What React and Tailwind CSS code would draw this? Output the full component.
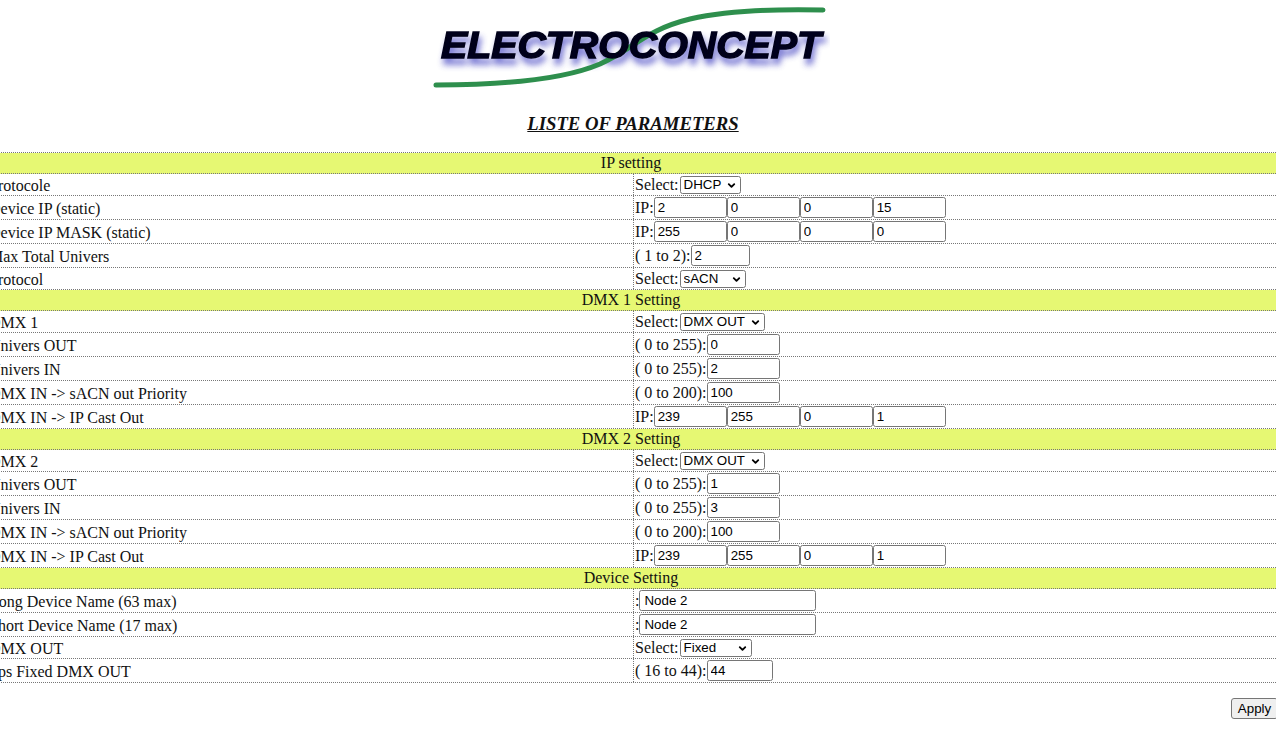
import { ChevronDown } from "lucide-react";

const SERIF = "font-['Liberation_Serif',serif]";

const Logo = () => (
  <svg width="400" height="96" viewBox="0 0 400 96" className="block">
    <defs>
      <filter id="glow" x="-10%" y="-50%" width="120%" height="200%">
        <feGaussianBlur stdDeviation="3" />
      </filter>
      <filter id="soft" x="-5%" y="-20%" width="110%" height="140%">
        <feGaussianBlur stdDeviation="0.35" />
      </filter>
    </defs>
    <text x="13" y="64" textLength="380" lengthAdjust="spacingAndGlyphs" fontFamily="Liberation Sans" fontWeight="bold" fontStyle="italic" fontSize="36" fill="#3c3cc0" stroke="#3c3cc0" strokeWidth="1.5" filter="url(#glow)" opacity="0.7">
      ELECTROCONCEPT
    </text>
    <path d="M6 85 C 60 85 130 81 170 64 C 205 48 215 30 260 19 C 300 10 350 9 393 10" fill="none" stroke="#2f8f4e" strokeWidth="5" strokeLinecap="round" filter="url(#soft)" />
    <text x="11" y="58" textLength="380" lengthAdjust="spacingAndGlyphs" fontFamily="Liberation Sans" fontWeight="bold" fontStyle="italic" fontSize="36" fill="#05051a" stroke="#05051a" strokeWidth="1.4" filter="url(#soft)">
      ELECTROCONCEPT
    </text>
  </svg>
);

const Input = ({ value, className }) => (
  <input
    readOnly
    value={value}
    className={`h-[21px] rounded-[2.5px] border border-[#767676] bg-white pr-[2px] pl-[3px] font-['Liberation_Sans',sans-serif] text-[13.33px] text-black ${className}`}
  />
);

const Select = ({ value, className }) => (
  <span className={`relative ml-[1px] block h-[18px] ${className}`}>
    <select
      defaultValue={value}
      className="block h-full w-full appearance-none rounded-[2.5px] border border-[#767676] bg-white pl-[3px] font-['Liberation_Sans',sans-serif] text-[13.33px] text-black"
    >
      <option>{value}</option>
    </select>
    <ChevronDown size={11} strokeWidth={4} className="pointer-events-none absolute top-[4px] right-[4px] text-black" />
  </span>
);

const IpFields = ({ values }) => (
  <>
    IP:
    <span className="flex gap-0">
      {values.map((v, i) => (
        <Input key={i} value={v} className="w-[73px]" />
      ))}
    </span>
  </>
);

const Row = ({ label, h, children }) => (
  <div className={`grid grid-cols-[649px_1fr] border-b border-dotted border-[#777] ${h}`}>
    <div className="flex items-center pl-[5px] pt-[2px]">{label}</div>
    <div className="flex items-center border-l border-dotted border-[#777] pl-[1px]">{children}</div>
  </div>
);

const Section = ({ title }) => (
  <div className="flex h-[21px] items-center justify-center border-b border-dotted border-[#777] bg-[#e6f873]">{title}</div>
);

const DmxBlock = ({ n, out, inn }) => (
  <>
    <Section title={`DMX ${n} Setting`} />
    <Row label={`DMX ${n}`} h="h-[22px]"><span>Select:</span><Select value="DMX OUT" className="w-[85px]" /></Row>
    <Row label="Univers OUT" h="h-[24px]">( 0 to 255):<Input value={out} className="w-[73px]" /></Row>
    <Row label="Univers IN" h="h-[24px]">( 0 to 255):<Input value={inn} className="w-[73px]" /></Row>
    <Row label="DMX IN -> sACN out Priority" h="h-[24px]">( 0 to 200):<Input value="100" className="w-[73px]" /></Row>
    <Row label="DMX IN -> IP Cast Out" h="h-[24px]"><IpFields values={["239", "255", "0", "1"]} /></Row>
  </>
);

export default function App() {
  return (
    <div className={`h-[733px] w-[1276px] overflow-hidden bg-white text-[16px] leading-none text-[#111] ${SERIF}`}>
      <div className="ml-[-16px] w-[1294px]">
        <div className="flex justify-center pr-[2px]">
          <Logo />
        </div>
        <h2 className="mt-[16px] pl-[4px] text-center text-[18.72px] font-bold italic leading-[24px] underline">LISTE OF PARAMETERS</h2>
        <div className="mt-[16px] border-t border-dotted border-[#777]">
          <Section title="IP setting" />
          <Row label="Protocole" h="h-[22px]"><span>Select:</span><Select value="DHCP" className="w-[61px]" /></Row>
          <Row label="Device IP (static)" h="h-[24px]"><IpFields values={["2", "0", "0", "15"]} /></Row>
          <Row label="Device IP MASK (static)" h="h-[24px]"><IpFields values={["255", "0", "0", "0"]} /></Row>
          <Row label="Max Total Univers" h="h-[24px]">( 1 to 2):<Input value="2" className="w-[59px]" /></Row>
          <Row label="Protocol" h="h-[22px]"><span>Select:</span><Select value="sACN" className="w-[66px]" /></Row>
          <DmxBlock n={1} out="0" inn="2" />
          <DmxBlock n={2} out="1" inn="3" />
          <Section title="Device Setting" />
          <Row label="Long Device Name (63 max)" h="h-[24px]"><span>:</span><Input value="Node 2" className="w-[177px] pl-[4px]" /></Row>
          <Row label="Short Device Name (17 max)" h="h-[24px]"><span>:</span><Input value="Node 2" className="w-[177px] pl-[4px]" /></Row>
          <Row label="DMX OUT" h="h-[22px]"><span>Select:</span><Select value="Fixed" className="w-[72px]" /></Row>
          <Row label="Fps Fixed DMX OUT" h="h-[24px]">( 16 to 44):<Input value="44" className="w-[66px]" /></Row>
        </div>
        <div className="mt-[15px] flex justify-end">
          <button className="h-[21px] w-[47px] rounded-[3px] border border-[#767676] bg-[#efefef] font-['Liberation_Sans',sans-serif] text-[13.33px] text-black">Apply</button>
        </div>
      </div>
    </div>
  );
}
